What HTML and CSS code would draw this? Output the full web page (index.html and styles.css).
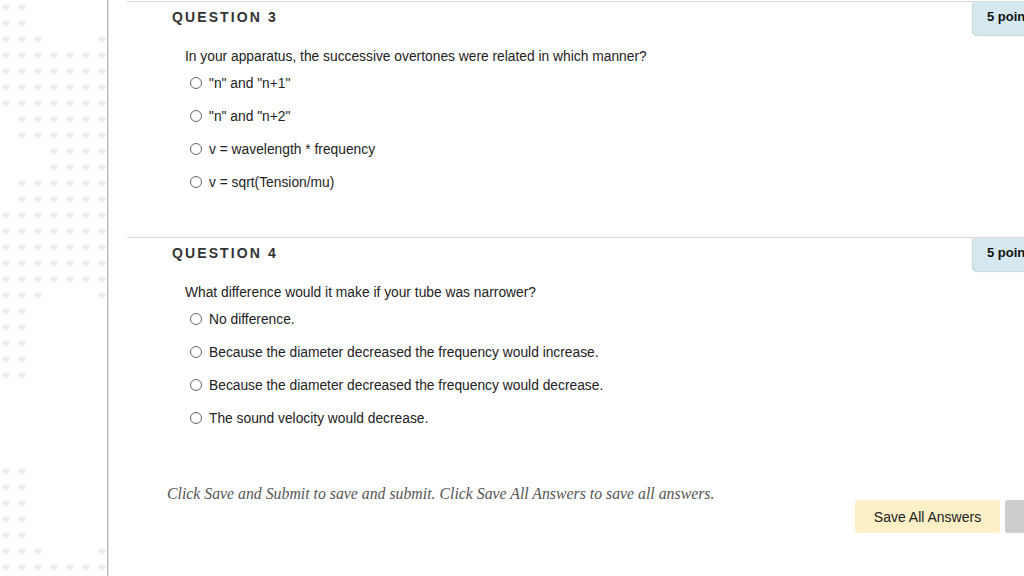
FILE: index.html
```html
<!DOCTYPE html>
<html lang="en">
<head>
<meta charset="utf-8">
<title>Quiz</title>
<link rel="stylesheet" href="styles.css">
</head>
<body>
<div class="page">
  <aside class="sidebar">
    <svg class="texture" width="107" height="576" viewBox="0 0 107 576" aria-hidden="true">
      <defs>
        <pattern id="plus" patternUnits="userSpaceOnUse" width="16" height="16">
          <rect x="2.5" y="6" width="7" height="2.6" fill="#ebebeb"/>
          <rect x="4.7" y="3.6" width="2.6" height="7" fill="#ebebeb"/>
        </pattern>
      </defs>
      <g fill="url(#plus)">
        <rect x="0" y="0" width="32" height="32"/>
        <rect x="0" y="32" width="48" height="16"/>
        <rect x="96" y="32" width="16" height="16"/>
        <rect x="0" y="48" width="112" height="64"/>
        <rect x="16" y="112" width="96" height="32"/>
        <rect x="48" y="144" width="64" height="32"/>
        <rect x="16" y="176" width="96" height="32"/>
        <rect x="0" y="208" width="112" height="80"/>
        <rect x="0" y="288" width="48" height="16"/>
        <rect x="96" y="288" width="16" height="16"/>
        <rect x="0" y="304" width="32" height="80"/>
        <rect x="0" y="464" width="32" height="80"/>
        <rect x="0" y="544" width="48" height="16"/>
        <rect x="96" y="544" width="16" height="16"/>
        <rect x="0" y="560" width="112" height="16"/>
      </g>
    </svg>
  </aside>

  <main class="content">
    <section class="question">
      <header class="q-head">
        <h2 class="q-title">QUESTION 3</h2>
        <div class="q-points">5 points</div>
      </header>
      <p class="q-text">In your apparatus, the successive overtones were related in which manner?</p>
      <ul class="options">
        <li><label><input type="radio" name="q3"> "n" and "n+1"</label></li>
        <li><label><input type="radio" name="q3"> "n" and "n+2"</label></li>
        <li><label><input type="radio" name="q3"> v = wavelength * frequency</label></li>
        <li><label><input type="radio" name="q3"> v = sqrt(Tension/mu)</label></li>
      </ul>
    </section>

    <section class="question">
      <header class="q-head">
        <h2 class="q-title">QUESTION 4</h2>
        <div class="q-points">5 points</div>
      </header>
      <p class="q-text">What difference would it make if your tube was narrower?</p>
      <ul class="options">
        <li><label><input type="radio" name="q4"> No difference.</label></li>
        <li><label><input type="radio" name="q4"> Because the diameter decreased the frequency would increase.</label></li>
        <li><label><input type="radio" name="q4"> Because the diameter decreased the frequency would decrease.</label></li>
        <li><label><input type="radio" name="q4"> The sound velocity would decrease.</label></li>
      </ul>
    </section>

    <footer class="submit">
      <p class="hint">Click Save and Submit to save and submit. Click Save All Answers to save all answers.</p>
      <div class="buttons">
        <button class="btn btn-save" type="button">Save All Answers</button>
        <button class="btn btn-submit" type="button">Save and Submit</button>
      </div>
    </footer>
  </main>
</div>
</body>
</html>
```

FILE: styles.css
```css
html, body {
  margin: 0;
  padding: 0;
  background: #fff;
  overflow: hidden;
}

body {
  font-family: "Liberation Sans", Arial, sans-serif;
  color: #222;
  width: 1024px;
  height: 576px;
}

.page {
  display: flex;
  height: 576px;
}

.sidebar {
  flex: 0 0 107px;
  height: 576px;
  border-right: 1px solid #b4b4b4;
  box-shadow: 1px 0 0 #e6e6e6;
}

.texture {
  display: block;
}

.content {
  flex: 0 0 auto;
  padding-left: 19px;
  width: 1010px;
}

.question {
  width: 926px;
  border-top: 1px solid #d8d8d8;
  margin-top: 1px;
  padding-bottom: 38px;
}

.question + .question {
  margin-top: 0;
}

.q-head {
  display: flex;
  align-items: flex-start;
  height: 34px;
}

.q-title {
  margin: 0;
  padding-left: 45px;
  font-size: 14px;
  font-weight: bold;
  letter-spacing: 2.1px;
  color: #333;
  line-height: 31px;
}

.q-points {
  margin-left: auto;
  width: 80px;
  height: 33px;
  padding-left: 14px;
  background: #d5e8ef;
  border-radius: 0 0 0 5px;
  box-shadow: -1px 1px 1px #c5d3d8;
  font-size: 13px;
  font-weight: bold;
  color: #111;
  line-height: 29px;
  white-space: nowrap;
  box-sizing: border-box;
}

.q-text {
  margin: 11px 0 0;
  padding-left: 58px;
  font-size: 13.8px;
  line-height: 20px;
  color: #222;
}

.options {
  list-style: none;
  margin: 0;
  padding: 0 0 0 63px;
}

.options li {
  height: 33px;
  display: flex;
  align-items: center;
  font-size: 13.8px;
  color: #222;
}

.options label {
  display: flex;
  align-items: center;
  gap: 7px;
}

.options input {
  appearance: none;
  -webkit-appearance: none;
  margin: 0;
  width: 12px;
  height: 12px;
  border: 1px solid #666;
  border-radius: 50%;
  background: #fff;
  box-sizing: border-box;
  position: relative;
  top: -1px;
}

.submit {
  width: 1006px;
  padding-top: 11px;
}

.hint {
  margin: 0;
  padding-left: 40px;
  font-family: "Liberation Serif", Georgia, serif;
  font-style: italic;
  font-size: 15.8px;
  line-height: 20px;
  color: #555;
}

.buttons {
  display: flex;
  justify-content: flex-end;
  gap: 5px;
  margin-top: -4px;
}

.btn {
  height: 33px;
  border: none;
  border-radius: 3px;
  font-family: "Liberation Sans", Arial, sans-serif;
  font-size: 14px;
  color: #222;
  padding: 0 14px;
}

.btn-save {
  background: #fdefc6;
  width: 145px;
}

.btn-submit {
  background: #cccccc;
  width: 128px;
}
```
